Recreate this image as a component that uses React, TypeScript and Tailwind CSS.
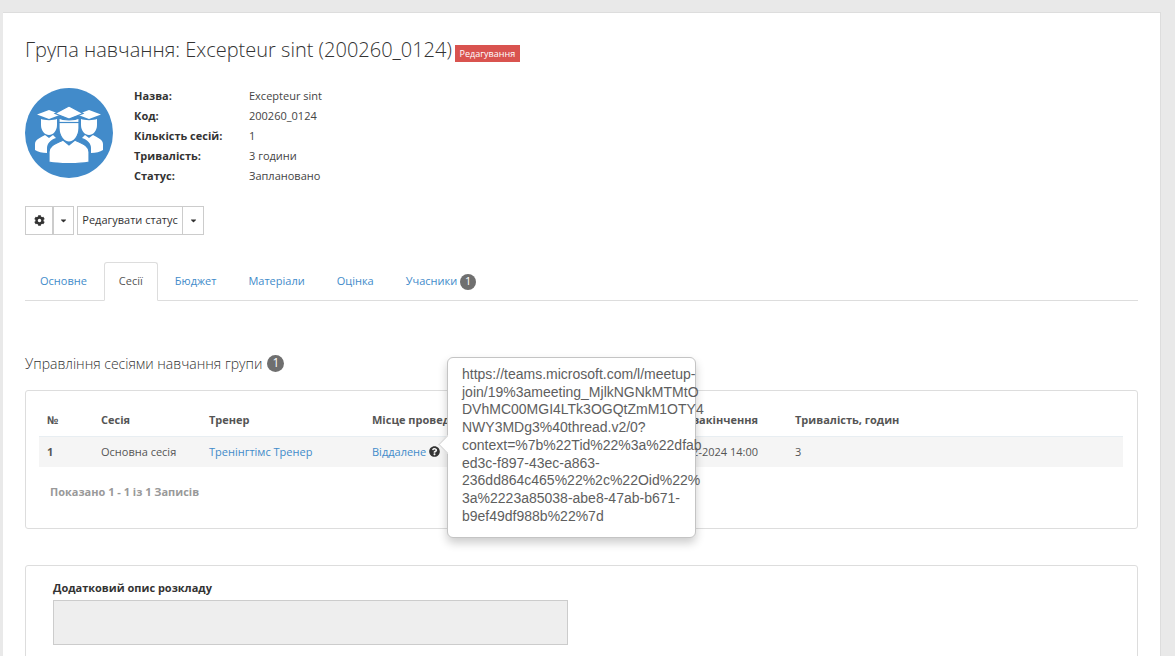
import React from 'react'
import { FaCog, FaCaretDown, FaQuestionCircle } from 'react-icons/fa'

const info = [
  ['Назва:', 'Excepteur sint'],
  ['Код:', '200260_0124'],
  ['Кількість сесій:', '1'],
  ['Тривалість:', '3 години'],
  ['Статус:', 'Заплановано'],
]

const tabs = ['Основне', 'Сесії', 'Бюджет', 'Матеріали', 'Оцінка', 'Учасники']

const tooltipLines = [
  'https://teams.microsoft.com/l/meetup-',
  'join/19%3ameeting_MjlkNGNkMTMtO',
  'DVhMC00MGI4LTk3OGQtZmM1OTY4',
  'NWY3MDg3%40thread.v2/0?',
  'context=%7b%22Tid%22%3a%22dfab',
  'ed3c-f897-43ec-a863-',
  '236dd864c465%22%2c%22Oid%22%',
  '3a%2223a85038-abe8-47ab-b671-',
  'b9ef49df988b%22%7d',
]

function Badge({ size }: { size: 'sm' | 'lg' }) {
  return (
    <span
      className={`inline-flex items-center justify-center rounded-full bg-[#6f6f6f] text-white ${
        size === 'sm' ? 'w-4 h-4 text-[11px]' : 'w-[17px] h-[17px] text-[12px]'
      }`}
    >
      1
    </span>
  )
}

function GroupIcon() {
  return (
    <svg viewBox="0 0 88 90" className="w-[88px] h-[90px] shrink-0">
      <ellipse cx="44" cy="45" rx="44" ry="45" fill="#428bca" />
      {/* back students */}
      <g fill="#fff">
        <path d="M12 26.5 L24 22 L36 26.5 L24 31 Z" />
        <path d="M52 26.5 L64 22 L76 26.5 L64 31 Z" />
        <path d="M16 31 C19 32.5 29 32.5 32 31 L32 37 C32 43 28 47 24 47 C20 47 16 43 16 37 Z" />
        <path d="M56 31 C59 32.5 69 32.5 72 31 L72 37 C72 43 68 47 64 47 C60 47 56 43 56 37 Z" />
        <path d="M10 62 L10 56 C10 51 17 49 20 47 L24 50 L28 47 L31 50 C25 52 22 56 22 60 L22 65 C17 65 13 64 10 62 Z" />
        <path d="M78 62 L78 56 C78 51 71 49 68 47 L64 50 L60 47 L57 50 C63 52 66 56 66 60 L66 65 C71 65 75 64 78 62 Z" />
      </g>
      {/* front student */}
      <g fill="#fff" stroke="#428bca" strokeWidth="1.2">
        <path d="M30 25.5 L44 18 L58 25.5 L44 31 Z" />
        <path d="M34 30 C38 32.5 50 32.5 54 30 L54 40 C54 48 49 54 44 54 C39 54 34 48 34 40 Z" />
        <path d="M24 74 L24 64 C24 57 33 55 38 52 L44 57 L50 52 C55 55 64 57 64 64 L64 74 C55 76 33 76 24 74 Z" />
      </g>
      <path d="M34 34.5 H54" stroke="#428bca" strokeWidth="1.2" />
    </svg>
  )
}

export default function App() {
  return (
    <div className="h-[656px] overflow-hidden bg-[#e9e9e9] pt-3 pl-[3px] pr-[14px] font-['Open_Sans',sans-serif] text-[11px] text-[#333]">
      <div className="relative h-[700px] bg-white border-t border-r border-[#dddddd] px-[22px]">
        {/* Title */}
        <div className="flex items-start pt-[22px] h-[72px]">
          <h1 className="text-[20px] leading-[30px] font-light text-[#333] whitespace-nowrap">
            Група навчання: Excepteur sint (200260_0124)
          </h1>
          <span className="ml-[3px] mt-[10px] h-[17px] w-[65px] bg-[#d9534f] text-white text-[9px] leading-[17px] text-center">
            Редагування
          </span>
        </div>

        {/* Summary */}
        <div className="flex items-start mt-[3px]">
          <GroupIcon />
          <div className="ml-[21px] -mt-[2px]">
            {info.map(([label, value]) => (
              <div key={label} className="flex h-5 items-center">
                <span className="w-[115px] font-bold text-[#333]">{label}</span>
                <span className="text-[#444]">{value}</span>
              </div>
            ))}
          </div>
        </div>

        {/* Action buttons */}
        <div className="flex mt-[20px] h-[29px] gap-[3px]">
          <div className="flex">
            <div className="w-[28px] border border-[#ccc] flex items-center justify-center text-[#333]">
              <FaCog className="w-[11px] h-[11px]" />
            </div>
            <div className="w-[21px] -ml-[0px] border border-[#ccc] border-l-[#ccc] flex items-center justify-center text-[#333]">
              <FaCaretDown className="w-[9px] h-[9px]" />
            </div>
          </div>
          <div className="flex">
            <div className="w-[106px] border border-[#ccc] flex items-center justify-center text-[#333]">
              Редагувати статус
            </div>
            <div className="w-[21px] border border-l-0 border-[#ccc] flex items-center justify-center text-[#333]">
              <FaCaretDown className="w-[9px] h-[9px]" />
            </div>
          </div>
        </div>

        {/* Tabs */}
        <div className="flex mt-[27px] h-[39px] border-b border-[#dddddd] pl-0">
          {tabs.map((tab) => (
            <div
              key={tab}
              className={`h-[39px] px-[14px] mr-[2px] flex items-center gap-[3px] border rounded-t-[3px] ${
                tab === 'Сесії'
                  ? 'border-[#dddddd] border-b-white text-[#555] bg-white'
                  : 'border-transparent text-[#428bca]'
              }`}
            >
              {tab}
              {tab === 'Учасники' && <Badge size="sm" />}
            </div>
          ))}
        </div>

        {/* Sessions */}
        <div className="flex items-center gap-[5px] mt-[50px] h-[24px]">
          <h2 className="text-[14px] font-light text-[#333]">Управління сесіями навчання групи</h2>
          <Badge size="lg" />
        </div>

        <div className="mt-[15px] w-[1113px] h-[139px] border border-[#dddddd] rounded-[3px] px-[13px] pt-[13px]">
          <table className="w-[1084px] table-fixed border-collapse">
            <colgroup>
              <col className="w-[54px]" />
              <col className="w-[108px]" />
              <col className="w-[163px]" />
              <col className="w-[160px]" />
              <col className="w-[263px]" />
              <col />
            </colgroup>
            <thead>
              <tr className="h-[32px] text-left font-bold text-[#555]">
                <th className="pl-2">№</th>
                <th className="pl-2">Сесія</th>
                <th className="pl-2">Тренер</th>
                <th className="pl-2 whitespace-nowrap">Місце проведення</th>
                <th className="pl-2 text-right pr-[29px]">Дата закінчення</th>
                <th className="pl-2">Тривалість, годин</th>
              </tr>
            </thead>
            <tbody>
              <tr className="h-[31px] bg-[#f5f5f5] border-t border-[#e8eef2]">
                <td className="pl-2 font-bold text-[#555]">1</td>
                <td className="pl-2 text-[#555]">Основна сесія</td>
                <td className="pl-2 text-[#428bca]">Тренінгтімс Тренер</td>
                <td className="pl-2">
                  <span className="inline-flex items-center gap-[3px] text-[#428bca]">
                    Віддалене <FaQuestionCircle className="w-[11px] h-[11px] text-[#333]" />
                  </span>
                </td>
                <td className="pl-2 text-right pr-[29px] text-[#555]">08-02-2024 14:00</td>
                <td className="pl-2 text-[#555]">3</td>
              </tr>
            </tbody>
          </table>
          <p className="mt-[17px] pl-[11px] font-bold text-[#999]">Показано 1 - 1 із 1 Записів</p>
        </div>

        {/* Schedule description */}
        <div className="mt-[36px] w-[1113px] h-[140px] border border-[#dddddd] rounded-[3px] px-[27px] pt-[14px]">
          <label className="block font-bold text-[#333] leading-[16px]">Додатковий опис розкладу</label>
          <div className="mt-[4px] w-[515px] h-[45px] bg-[#eeeeee] border border-[#cccccc]" />
        </div>

        {/* Popover */}
        <div className="absolute left-[444px] top-[344px] w-[249px] h-[181px] bg-white border border-[#c4c4c4] rounded-[6px] shadow-[0_5px_10px_rgba(0,0,0,0.2)] px-[14px] pt-[8px] font-['Liberation_Sans',sans-serif] text-[14px] leading-[17.7px] text-[#5e5e5e]">
          {tooltipLines.map((line) => (
            <div key={line} className="whitespace-nowrap">{line}</div>
          ))}
          <span className="absolute -left-[7px] top-[80px] w-[13px] h-[13px] rotate-45 bg-white border-l border-b border-[#d4d4d4]" />
        </div>
      </div>
    </div>
  )
}
